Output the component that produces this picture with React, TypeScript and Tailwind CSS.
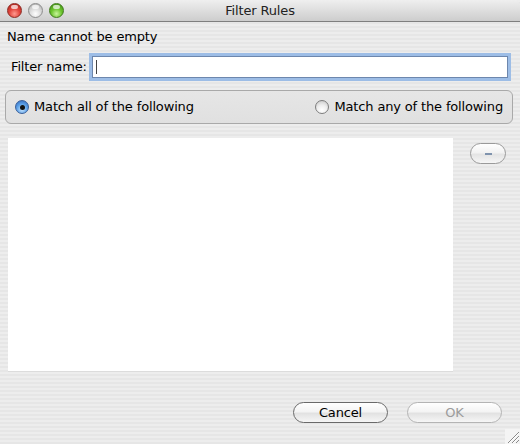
import React from 'react'

const stripes =
  'bg-[repeating-linear-gradient(180deg,#ededed_0px,#ededed_2px,#e6e6e6_2px,#e6e6e6_4px)]'

function Light({ kind }: { kind: 'red' | 'gray' | 'green' }) {
  const fill =
    kind === 'red'
      ? 'bg-[radial-gradient(circle_at_50%_75%,#ff9a8f_0%,#e2453c_45%,#a9201a_100%)] border-[#8c2a22]'
      : kind === 'green'
        ? 'bg-[radial-gradient(circle_at_50%_75%,#c8f59a_0%,#6cc42e_45%,#3d8a12_100%)] border-[#3f7a1c]'
        : 'bg-[radial-gradient(circle_at_50%_75%,#ffffff_0%,#dcdcdc_45%,#a8a8a8_100%)] border-[#8e8e8e]'
  return (
    <div className={`relative w-[15px] h-[15px] rounded-full border ${fill}`}>
      <div className="absolute left-[3px] top-[1px] w-[7px] h-[4px] rounded-full bg-white/70" />
    </div>
  )
}

function Radio({ on }: { on: boolean }) {
  return on ? (
    <div className="w-[14px] h-[14px] rounded-full border border-[#3a5f9a] bg-[radial-gradient(circle_at_50%_70%,#c8e6ff_0%,#5ea2e8_50%,#2d64b8_100%)] flex items-center justify-center shrink-0">
      <div className="w-[5px] h-[5px] rounded-full bg-[#111]" />
    </div>
  ) : (
    <div className="w-[14px] h-[14px] rounded-full border border-[#7d7d7d] bg-[radial-gradient(circle_at_50%_75%,#ffffff_0%,#eeeeee_45%,#c2c2c2_100%)] shrink-0" />
  )
}

function PillButton({ label, disabled }: { label: string; disabled?: boolean }) {
  return (
    <div
      className={`w-[95px] h-[21px] rounded-full border flex items-center justify-center text-[13px] bg-[linear-gradient(180deg,#ffffff_0%,#f4f4f4_45%,#e2e2e2_55%,#f6f6f6_100%)] ${
        disabled ? 'border-[#b4b4b4] text-[#9c9c9c]' : 'border-[#6a6a6a] text-black'
      }`}
    >
      {label}
    </div>
  )
}

export default function App() {
  return (
    <div
      className={`relative w-[520px] h-[444px] overflow-hidden ${stripes} text-[13px] leading-[16px] tracking-[-0.15px] text-black`}
      style={{ fontFamily: '"DejaVu Sans", "Liberation Sans", sans-serif' }}
    >
      {/* title bar */}
      <div className="relative h-[22px] rounded-t-[5px] border-b border-[#7f7f7f] bg-[linear-gradient(180deg,#efefef_0%,#dedede_50%,#cdcdcd_100%)] flex items-center">
        <div className="flex gap-[6px] pl-[7px]">
          <Light kind="red" />
          <Light kind="gray" />
          <Light kind="green" />
        </div>
        <div className="absolute inset-0 flex items-center justify-center text-[13px] text-[#222]">
          Filter Rules
        </div>
      </div>

      <div className="mt-[7px] pl-[7px]">Name cannot be empty</div>

      <div className="mt-[11px] flex items-center">
        <div className="w-[92px] pl-[11px] shrink-0">Filter name:</div>
        <div className="w-[416px] h-[22px] bg-white border border-[#6d87ad] shadow-[0_0_0_3px_#9dbde6] flex items-center pl-[3px]">
          <div className="w-[1px] h-[14px] bg-[#444]" />
        </div>
      </div>

      <div className="mt-[12px] ml-[5px] w-[508px] h-[34px] rounded-[6px] border border-[#a9a9a9] bg-[linear-gradient(180deg,#e6e6e6_0%,#e0e0e0_100%)] flex items-center justify-between pl-[9px] pr-[9px]">
        <div className="flex items-center gap-[5px]">
          <Radio on />
          <span>Match all of the following</span>
        </div>
        <div className="flex items-center gap-[5px]">
          <Radio on={false} />
          <span>Match any of the following</span>
        </div>
      </div>

      <div className="mt-[14px] flex items-start">
        <div className="ml-[8px] w-[445px] h-[234px] bg-white border-b border-[#dcdcdc]" />
        <div className="ml-[17px] mt-[5px] w-[36px] h-[21px] rounded-full border border-[#9a9a9a] bg-[linear-gradient(180deg,#ffffff_0%,#f2f2f2_45%,#e4e4e4_55%,#f6f6f6_100%)] flex items-center justify-center">
          <div className="w-[7px] h-[2px] bg-[#7f93ad]" />
        </div>
      </div>

      <div className="mt-[30px] flex justify-end gap-[19px] pr-[18px]">
        <PillButton label="Cancel" />
        <PillButton label="OK" disabled />
      </div>

      {/* resize grip */}
      <svg className="absolute right-0 bottom-0" width="15" height="15" viewBox="0 0 15 15">
        <rect x="0" y="0" width="15" height="15" fill="#f4f4f4" />
        <line x1="14" y1="3" x2="3" y2="14" stroke="#8a8a8a" strokeWidth="1" />
        <line x1="14" y1="7" x2="7" y2="14" stroke="#8a8a8a" strokeWidth="1" />
        <line x1="14" y1="11" x2="11" y2="14" stroke="#8a8a8a" strokeWidth="1" />
        <line x1="14" y1="4" x2="4" y2="14" stroke="#ffffff" strokeWidth="1" />
        <line x1="14" y1="8" x2="8" y2="14" stroke="#ffffff" strokeWidth="1" />
      </svg>
    </div>
  )
}
